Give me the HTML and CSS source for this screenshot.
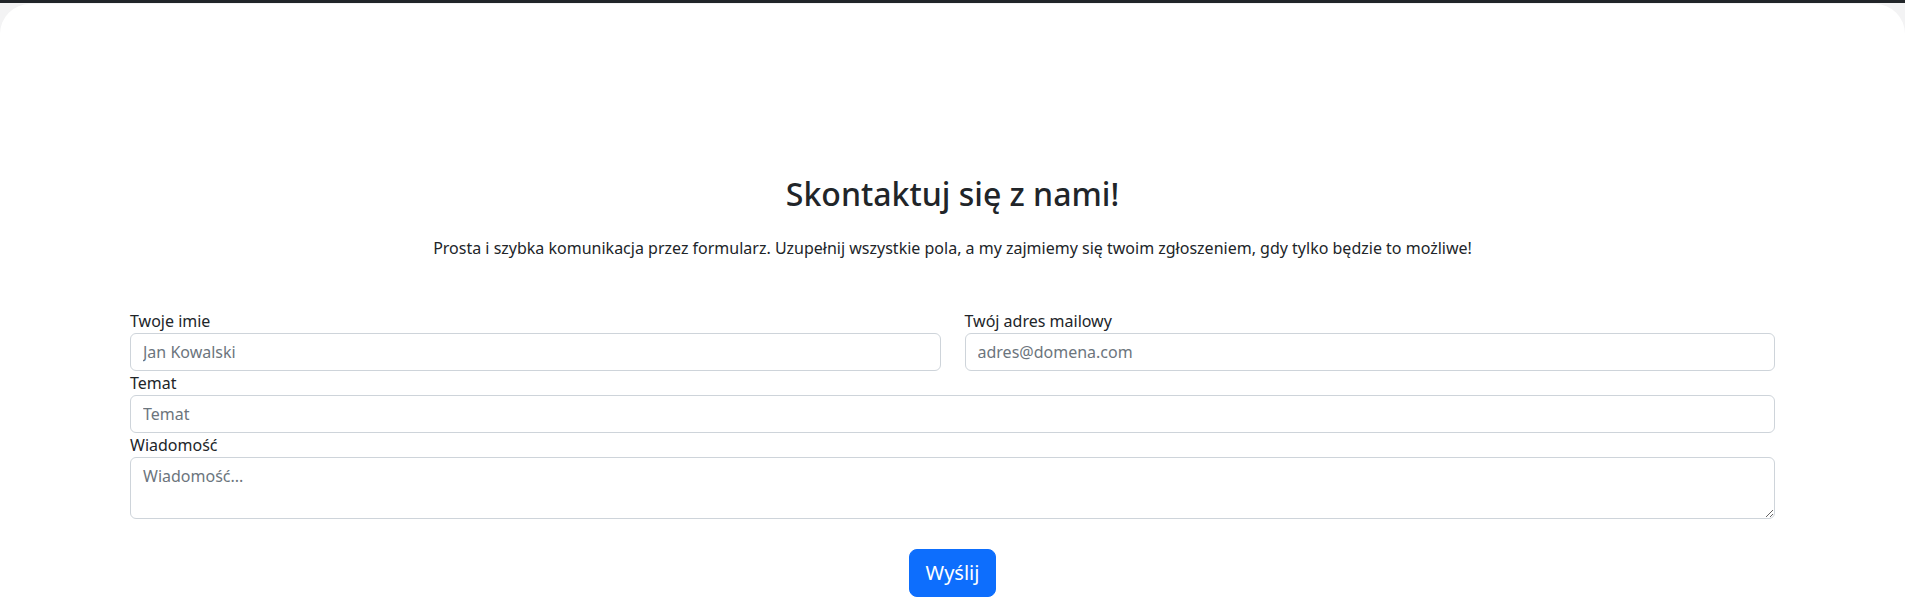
FILE: index.html
```html
<!DOCTYPE html>
<html lang="pl">
<head>
<meta charset="utf-8">
<title>Kontakt</title>
<link rel="stylesheet" href="styles.css">
</head>
<body>
<main class="card">
  <section class="contact">
    <h2 class="title">Skontaktuj się z nami!</h2>
    <p class="lead">Prosta i szybka komunikacja przez formularz. Uzupełnij wszystkie pola, a my zajmiemy się twoim zgłoszeniem, gdy tylko będzie to możliwe!</p>
    <form class="form">
      <div class="row">
        <div class="field">
          <label class="label" for="name">Twoje imie</label>
          <input class="control" id="name" type="text" placeholder="Jan Kowalski">
        </div>
        <div class="field">
          <label class="label" for="email">Twój adres mailowy</label>
          <input class="control" id="email" type="email" placeholder="adres@domena.com">
        </div>
      </div>
      <div class="field">
        <label class="label" for="subject">Temat</label>
        <input class="control" id="subject" type="text" placeholder="Temat">
      </div>
      <div class="field">
        <label class="label" for="msg">Wiadomość</label>
        <textarea class="control area" id="msg" rows="2" placeholder="Wiadomość..."></textarea>
      </div>
      <div class="actions">
        <button class="btn" type="button">Wyślij</button>
      </div>
    </form>
  </section>
</main>
</body>
</html>
```

FILE: styles.css
```css
* { box-sizing: border-box; }
html, body { margin: 0; padding: 0; }
body {
  font-family: "Noto Sans", "Open Sans", sans-serif;
  font-size: 16px;
  line-height: 1.5;
  color: #212529;
  background: #f3f3f4;
  border-top: 3px solid #212529;
  height: 606px;
  overflow: hidden;
}
.card {
  background: #fff;
  margin-top: 1px;
  border-radius: 30px 30px 0 0;
  min-height: 602px;
  padding: 171px 118px 0;
}
.contact { display: flex; flex-direction: column; }
.title {
  margin: 0;
  text-align: center;
  font-size: 32px;
  font-weight: 500;
  line-height: 1.2;
}
.lead {
  margin: 23px 0 0;
  text-align: center;
  font-size: 16px;
}
.form {
  margin-top: 49px;
  padding: 0 12px;
  display: flex;
  flex-direction: column;
}
.row {
  display: grid;
  grid-template-columns: 1fr 1fr;
  column-gap: 24px;
}
.field { display: flex; flex-direction: column; }
.label { display: block; line-height: 24px; }
.control {
  font: inherit;
  font-size: 16px;
  line-height: 24px;
  color: #212529;
  padding: 6px 12px;
  border: 1px solid #ced4da;
  border-radius: 6px;
  background: #fff;
  width: 100%;
  height: 38px;
}
.control::placeholder { color: #6c757d; opacity: 1; }
.area { height: 62px; resize: vertical; display: block; }
.actions {
  display: flex;
  justify-content: center;
  margin-top: 30px;
}
.btn {
  font: inherit;
  font-size: 20px;
  line-height: 30px;
  padding: 8px 16px;
  color: #fff;
  background: #0d6efd;
  border: 1px solid #0d6efd;
  border-radius: 8px;
}
```
